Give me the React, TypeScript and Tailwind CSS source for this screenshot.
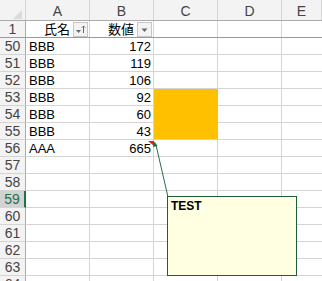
import React from "react";

const cols = ["A", "B", "C", "D", "E"];
const widths = ["w-[64px]", "w-[64px]", "w-[64px]", "w-[64px]", "flex-1"];

const rows: { n: number; a?: string; b?: string; fill?: "mid" | "end" }[] = [
  { n: 50, a: "BBB", b: "172" },
  { n: 51, a: "BBB", b: "119" },
  { n: 52, a: "BBB", b: "106" },
  { n: 53, a: "BBB", b: "92", fill: "mid" },
  { n: 54, a: "BBB", b: "60", fill: "mid" },
  { n: 55, a: "BBB", b: "43", fill: "end" },
  { n: 56, a: "AAA", b: "665" },
  { n: 57 },
  { n: 58 },
  { n: 59 },
  { n: 60 },
  { n: 61 },
  { n: 62 },
  { n: 63 },
  { n: 64 },
];

const FilterBtn = ({ sorted }: { sorted?: boolean }) => (
  <div className="w-[15px] h-[15px] border border-[#c6c6c6] bg-[#f3f3f3] flex items-center justify-center shrink-0">
    <svg width="13" height="13" viewBox="0 0 13 13">
      {sorted ? (
        <>
          <path d="M2 7h5l-2.5 3z" fill="#666" />
          <path d="M9.5 3v7M8 4.5l1.5-1.5 1.5 1.5" stroke="#666" strokeWidth="1" fill="none" />
        </>
      ) : (
        <path d="M3.5 5.5h6l-3 3.5z" fill="#666" />
      )}
    </svg>
  </div>
);

const App = () => {
  return (
    <div
      className="relative w-[322px] h-[281px] overflow-hidden bg-white text-[13px] text-black"
      style={{ fontFamily: '"Liberation Sans", "Noto Sans CJK JP", sans-serif' }}
    >
      {/* column headers */}
      <div className="flex h-[21px] bg-[#f3f3f3] border-b border-[#ababab] text-[#444]">
        <div className="w-[26px] border-r border-[#d5d5d5] relative shrink-0">
          <svg className="absolute left-[13px] top-[10px]" width="9" height="9" viewBox="0 0 9 9">
            <path d="M9 0V9H0z" fill="#dadada" />
          </svg>
        </div>
        {cols.map((c, i) => (
          <div
            key={c}
            className={`${widths[i]} shrink-0 border-r border-[#d5d5d5] flex items-center justify-center text-[14px] leading-none pt-[1px]`}
          >
            {c}
          </div>
        ))}
      </div>

      {/* row 1 (frozen) */}
      <div className="flex h-[17px] border-b border-[#9b9b9b]">
        <div className="w-[26px] shrink-0 bg-[#f3f3f3] border-r border-[#ababab] text-[#444] flex items-center justify-center text-[14px]">
          1
        </div>
        <div className="w-[64px] shrink-0 border-r border-[#d4d4d4] flex items-center justify-end gap-[2px] pr-[1px]">
          <span className="text-[13px] leading-none mr-[1px]">氏名</span>
          <FilterBtn sorted />
        </div>
        <div className="w-[64px] shrink-0 border-r border-[#d4d4d4] flex items-center justify-end gap-[2px] pr-[1px]">
          <span className="text-[13px] leading-none mr-[1px]">数値</span>
          <FilterBtn />
        </div>
        <div className="w-[64px] shrink-0 border-r border-[#d4d4d4]" />
        <div className="w-[64px] shrink-0 border-r border-[#d4d4d4]" />
        <div className="flex-1" />
      </div>

      {/* data rows */}
      {rows.map((r) => {
        const sel = r.n === 59;
        return (
          <div key={r.n} className="flex h-[17px]">
            <div
              className={`w-[26px] shrink-0 flex items-center justify-center text-[14px] border-b border-[#d4d4d4] ${
                sel
                  ? "bg-[#d2d2d2] text-[#217346] border-r-2 border-r-[#217346]"
                  : "bg-[#f3f3f3] text-[#444] border-r border-r-[#ababab]"
              }`}
            >
              {r.n}
            </div>
            <div className="w-[64px] shrink-0 border-r border-b border-[#d4d4d4] flex items-center pl-[3px] leading-none">
              {r.a}
            </div>
            <div className="w-[64px] shrink-0 border-r border-b border-[#d4d4d4] flex items-center justify-end pr-[2px] leading-none">
              {r.b}
            </div>
            <div
              className={`w-[64px] shrink-0 border-r border-b ${
                r.fill === "mid"
                  ? "bg-[#ffc000] border-[#ffc000]"
                  : r.fill === "end"
                  ? "bg-[#ffc000] border-r-[#ffc000] border-b-[#d4d4d4]"
                  : "border-[#d4d4d4]"
              }`}
            />
            <div className="w-[64px] shrink-0 border-r border-b border-[#d4d4d4]" />
            <div className="flex-1 border-b border-[#d4d4d4]" />
          </div>
        );
      })}

      {/* comment indicator + connector */}
      <svg className="absolute inset-0 pointer-events-none" width="322" height="281">
        <path d="M148 141h6v5z" fill="#e02020" />
        <line x1="156" y1="145" x2="168" y2="197" stroke="#2e6b48" strokeWidth="1" />
        <path d="M154.5 141.5l-1.5 5.5 4.5-1z" fill="#1e6b3a" />
      </svg>

      {/* comment box */}
      <div className="absolute left-[167px] top-[196px] w-[130px] h-[80px] bg-[#ffffe1] border border-[#1e5e3a] px-[3px] py-[2px]">
        <div className="font-bold text-[12px] leading-[14px]">TEST</div>
      </div>
    </div>
  );
};

export default App;
